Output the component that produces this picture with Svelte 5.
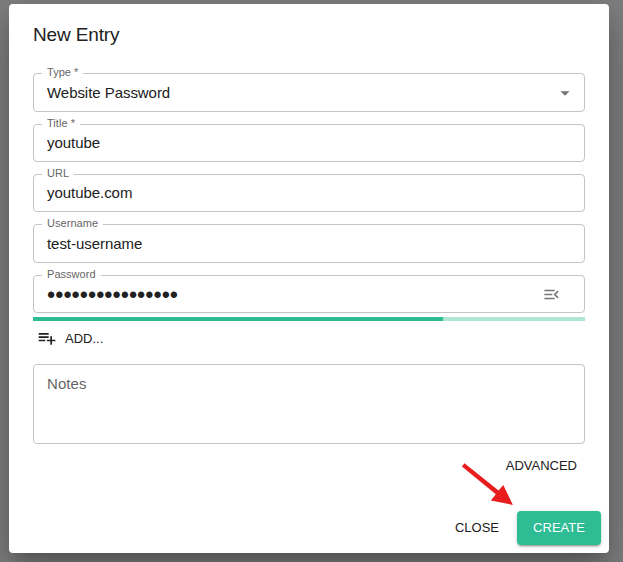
<script>
  let fields = $state([
    { label: 'Type *', value: 'Website Password', kind: 'select', height: 39 },
    { label: 'Title *', value: 'youtube', kind: 'text', height: 38 },
    { label: 'URL', value: 'youtube.com', kind: 'text', height: 38 },
    { label: 'Username', value: 'test-username', kind: 'text', height: 39 },
    { label: 'Password', value: 'correct-horse-16', kind: 'password', height: 38 }
  ]);
  let notes = $state('');
  let strength = 74.3;
</script>

<div class="backdrop">
  <div class="dialog" role="dialog" aria-labelledby="dialog-title">
    <h2 id="dialog-title">New Entry</h2>

    <div class="content">
      {#each fields as field}
        <div class="field" style="height: {field.height}px">
          <label for={field.label}>{field.label}</label>
          {#if field.kind === 'select'}
            <div class="value" id={field.label}>{field.value}</div>
            <svg class="caret" viewBox="0 0 24 24"><path d="M7 10l5 5 5-5z" /></svg>
          {:else}
            <input
              class="value"
              class:secret={field.kind === 'password'}
              id={field.label}
              type={field.kind}
              bind:value={field.value}
            />
          {/if}
          {#if field.kind === 'password'}
            <svg class="menu-open" viewBox="0 0 24 24">
              <path d="M3 18h13v-2H3v2zm0-5h10v-2H3v2zm0-7v2h13V6H3zm18 9.59L17.42 12 21 8.41 19.59 7l-5 5 5 5L21 15.59z" />
            </svg>
          {/if}
        </div>
      {/each}

      <div class="strength"><div class="bar" style="width: {strength}%"></div></div>

      <button class="add">
        <svg viewBox="0 0 24 24">
          <path d="M14 10H2v2h12v-2zm0-4H2v2h12V6zm4 8v-4h-2v4h-4v2h4v4h2v-4h4v-2h-4zM2 16h8v-2H2v2z" />
        </svg>
        <span>ADD...</span>
      </button>

      <textarea placeholder="Notes" bind:value={notes}></textarea>

      <button class="advanced">ADVANCED</button>
    </div>

    <div class="actions">
      <button class="close">CLOSE</button>
      <button class="create">CREATE</button>
    </div>
  </div>

  <svg class="arrow" width="54" height="44" viewBox="0 0 54 44">
    <path d="M3.5 0.3L37.6 27.6 42.3 22 51.9 41.9 29.8 37.5 34.8 31.2 0.9 3.6z" />
  </svg>
</div>

<style>
  :global(body) {
    margin: 0;
    overflow: hidden;
  }

  .backdrop {
    position: relative;
    box-sizing: border-box;
    width: 623px;
    height: 562px;
    padding: 4px 14px 9px 9px;
    overflow: hidden;
    background: #7f7f7f;
    font-family: "Liberation Sans", Arial, sans-serif;
    color: #212121;
  }

  .dialog {
    display: flex;
    flex-direction: column;
    box-sizing: border-box;
    height: 549px;
    border-radius: 4px;
    background: #fff;
    box-shadow:
      0 11px 15px -7px rgba(0, 0, 0, 0.2),
      0 24px 38px 3px rgba(0, 0, 0, 0.14),
      0 9px 46px 8px rgba(0, 0, 0, 0.12);
  }

  h2 {
    height: 30px;
    margin: 16px 24px 23px;
    font-size: 19px;
    font-weight: 400;
    line-height: 30px;
    letter-spacing: -0.15px;
  }

  .content {
    display: flex;
    flex-direction: column;
    padding: 0 24px;
  }

  .field {
    position: relative;
    display: flex;
    align-items: center;
    box-sizing: border-box;
    margin-bottom: 12px;
    padding: 0 13px;
    border: 1px solid #c4c4c4;
    border-radius: 4px;
  }

  label {
    position: absolute;
    top: -9px;
    left: 8px;
    padding: 0 5px;
    background: #fff;
    color: #666;
    font-size: 11px;
    line-height: 14px;
    letter-spacing: 0.04px;
  }

  .value {
    flex: 1;
    min-width: 0;
    padding: 0;
    border: 0;
    outline: 0;
    background: none;
    color: inherit;
    font-family: inherit;
    font-size: 15px;
    line-height: 20px;
    letter-spacing: -0.05px;
  }

  .secret {
    height: 24px;
    padding-top: 2px;
    font-size: 23.4px;
    letter-spacing: 0;
  }

  .caret,
  .menu-open {
    flex: none;
    width: 22px;
    height: 22px;
    margin-right: -5px;
    fill: #757575;
  }

  .menu-open {
    width: 19px;
    height: 19px;
    margin-right: 10.5px;
  }

  .strength {
    height: 4px;
    margin-top: -8px;
    background: #afe5d3;
  }

  .bar {
    height: 4px;
    background: #2dbc94;
  }

  button {
    border: 0;
    padding: 0;
    background: none;
    color: inherit;
    font-family: inherit;
    font-size: 13px;
    line-height: 22px;
    letter-spacing: 0;
  }

  .add {
    display: flex;
    align-items: center;
    gap: 8px;
    height: 35px;
    padding-left: 4px;
  }

  .add svg {
    width: 20px;
    height: 20px;
    margin-bottom: 2px;
    fill: #212121;
  }

  textarea {
    box-sizing: border-box;
    height: 80px;
    margin: 8px 0 0;
    padding: 9px 13px;
    border: 1px solid #c4c4c4;
    border-radius: 4px;
    outline: 0;
    resize: none;
    font-family: inherit;
    font-size: 15px;
    line-height: 20px;
    letter-spacing: 0.06px;
  }

  textarea::placeholder {
    color: #666;
    opacity: 1;
  }

  .advanced {
    align-self: flex-end;
    height: 34px;
    margin-top: 5px;
    padding: 0 8px;
  }

  .actions {
    display: flex;
    justify-content: flex-end;
    gap: 8px;
    margin-top: auto;
    padding: 8px;
  }

  .actions button {
    height: 34px;
  }

  .close {
    padding: 0 10px;
  }

  .create {
    width: 84px;
    border-radius: 4px;
    background: #2dbc94;
    box-shadow:
      0 3px 1px -2px rgba(0, 0, 0, 0.2),
      0 2px 2px rgba(0, 0, 0, 0.14),
      0 1px 5px rgba(0, 0, 0, 0.12);
  }

  .actions .create {
    color: #fff;
  }

  .arrow {
    position: absolute;
    top: 463px;
    left: 461px;
    fill: #e81e1e;
  }
</style>
